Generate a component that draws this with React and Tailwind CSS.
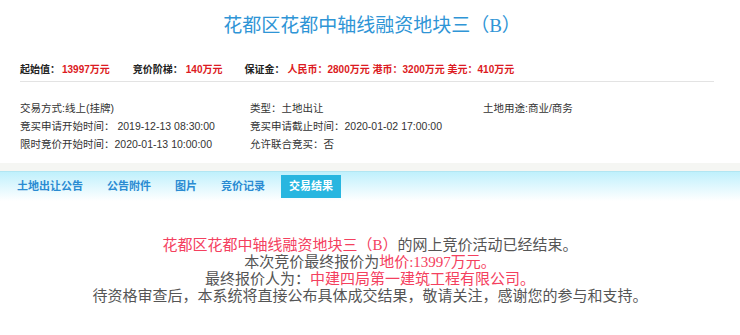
import React from "react";

export default function App() {
  const tabs = ["土地出让公告", "公告附件", "图片", "竞价记录", "交易结果"];
  return (
    <div className="w-[740px] h-[335px] bg-white overflow-hidden font-['Liberation_Sans','Noto_Sans_CJK_SC',sans-serif]">
      <div className="h-[50px] flex items-center justify-center">
        <h1 className="text-[19px] leading-none text-[#2f95d6] font-['Liberation_Serif','Noto_Sans_CJK_SC',serif] pl-[4px]">
          花都区花都中轴线融资地块三（B）
        </h1>
      </div>
      <div className="mt-[8px] ml-[20px] w-[694px] h-[24px] border-b border-[#e3e3e3] flex items-center text-[10px] font-bold text-[#222]">
        <span>起始值：</span>
        <span className="ml-[2px] text-[#dc1a22]">13997万元</span>
        <span className="ml-[23px]">竞价阶梯：</span>
        <span className="ml-[3px] text-[#dc1a22]">140万元</span>
        <span className="ml-[22px]">保证金：</span>
        <span className="ml-[3px] text-[#dc1a22]">人民币：2800万元 港币：3200万元 美元：410万元</span>
      </div>
      <div className="pt-[17px] pl-[20px] grid grid-cols-[230px_233px_1fr] text-[10.5px] leading-[18px] text-[#333]">
        <div>交易方式:线上(挂牌)</div>
        <div>类型：土地出让</div>
        <div>土地用途:商业/商务</div>
        <div>竞买申请开始时间： 2019-12-13 08:30:00</div>
        <div>竞买申请截止时间：2020-01-02 17:00:00</div>
        <div></div>
        <div>限时竞价开始时间：2020-01-13 10:00:00</div>
        <div>允许联合竞买：否</div>
        <div></div>
      </div>
      <div className="mt-[10px] h-[8px] bg-[#f5f6f3]"></div>
      <div className="h-[30px] border-t border-[#b2e6f2] bg-gradient-to-b from-[#bff0fc] to-white pt-[3px] pl-[9px] flex gap-[8px] items-start">
        {tabs.map((t, i) => (
          <div
            key={t}
            className={
              "h-[23px] px-[8px] flex items-center text-[11px] font-bold " +
              (i === 4 ? "bg-[#28b6e0] text-white" : "text-[#2a8bd2]")
            }
          >
            {t}
          </div>
        ))}
      </div>
      <div className="mt-[36px] flex flex-col items-center text-[15px] leading-[17px] text-[#555] font-['Liberation_Serif','Noto_Sans_CJK_SC',serif]">
        <div>
          <span className="text-[#f4405e]">花都区花都中轴线融资地块三（B）</span>的网上竞价活动已经结束。
        </div>
        <div>
          本次竞价最终报价为<span className="text-[#f4405e]">地价:13997万元。</span>
        </div>
        <div>
          最终报价人为：<span className="text-[#f4405e]">中建四局第一建筑工程有限公司。</span>
        </div>
        <div>待资格审查后，本系统将直接公布具体成交结果，敬请关注，感谢您的参与和支持。</div>
      </div>
    </div>
  );
}
